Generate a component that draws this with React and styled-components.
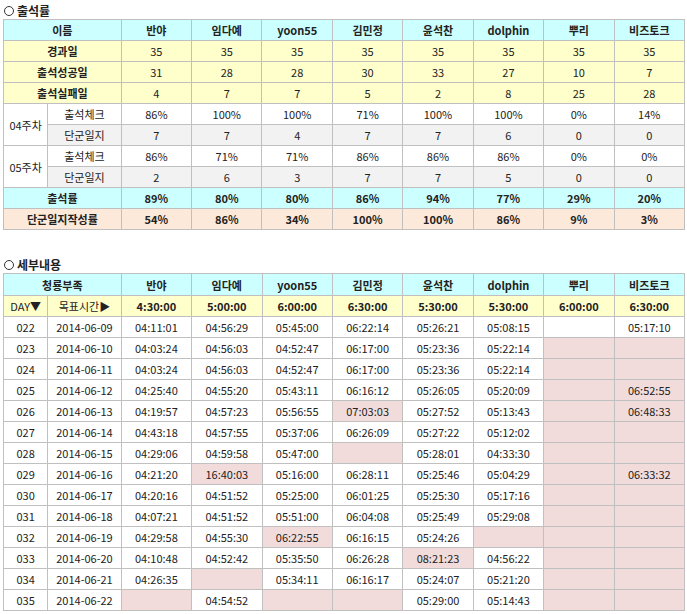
import React from 'react'
import styled, { createGlobalStyle } from 'styled-components'

const Global = createGlobalStyle`
  body {
    margin: 0;
    padding: 2px 2px 0 3px;
    font-family: "Noto Sans CJK KR", "Noto Sans", sans-serif;
    font-size: 11px;
    color: #222;
    background: #fff;
  }
`;

const Title = styled.div`
  font-size: 12px;
  font-weight: bold;
  height: 17px;
  line-height: 17px;
  padding-left: 1px;
  display: flex;
  align-items: center;
  gap: 3px;
`;

const Circle = styled.span`
  width: 8px;
  height: 8px;
  border: 1px solid #333;
  border-radius: 50%;
  display: inline-block;
`;

const Table = styled.table`
  border-collapse: collapse;
  table-layout: fixed;
  width: 682px;
  margin-bottom: ${p => p.$mb || 0}px;
`;

const colors = {
  cyan: '#ccffff',
  yellow: '#ffffcc',
  peach: '#fde9d9',
  grey: '#f2f2f2',
  pink: '#f2dcdb',
  white: '#fff',
};

const Cell = styled.td`
  border: 1px solid #c0c0c0;
  text-align: center;
  padding: 0;
  line-height: 14px;
  height: ${p => p.$h}px;
  background: ${p => colors[p.$bg || 'white']};
  font-weight: ${p => (p.$bold ? 'bold' : 'normal')};
  white-space: nowrap;
`;

const names = ['반야', '임다예', 'yoon55', '김민정', '윤석찬', 'dolphin', '뿌리', '비즈토크'];

const Cols = () => (
  <colgroup>
    <col style={{ width: 44 }} />
    <col style={{ width: 73 }} />
    {names.map(n => <col key={n} style={{ width: 70 }} />)}
  </colgroup>
);

const H = 20;

function SummaryRow({ label, values, bg, bold }) {
  return (
    <tr>
      <Cell colSpan={2} $h={H} $bg={bg} $bold>{label}</Cell>
      {values.map((v, i) => <Cell key={i} $h={H} $bg={bg} $bold={bold}>{v}</Cell>)}
    </tr>
  );
}

function WeekRows({ week, check, diary }) {
  return (
    <>
      <tr>
        <Cell rowSpan={2} $h={H}>{week}</Cell>
        <Cell $h={H}>출석체크</Cell>
        {check.map((v, i) => <Cell key={i} $h={H}>{v}</Cell>)}
      </tr>
      <tr>
        <Cell $h={H} $bg="grey">단군일지</Cell>
        {diary.map((v, i) => <Cell key={i} $h={H} $bg="grey">{v}</Cell>)}
      </tr>
    </>
  );
}

// '' = white empty, '!' prefix = pink, '!' alone = empty pink
const detail = [
  ['022', '2014-06-09', '04:11:01', '04:56:29', '05:45:00', '06:22:14', '05:26:21', '05:08:15', '', '05:17:10'],
  ['023', '2014-06-10', '04:03:24', '04:56:03', '04:52:47', '06:17:00', '05:23:36', '05:22:14', '!', '!'],
  ['024', '2014-06-11', '04:03:24', '04:56:03', '04:52:47', '06:17:00', '05:23:36', '05:22:14', '!', '!'],
  ['025', '2014-06-12', '04:25:40', '04:55:20', '05:43:11', '06:16:12', '05:26:05', '05:20:09', '!', '!06:52:55'],
  ['026', '2014-06-13', '04:19:57', '04:57:23', '05:56:55', '!07:03:03', '05:27:52', '05:13:43', '!', '!06:48:33'],
  ['027', '2014-06-14', '04:43:18', '04:57:55', '05:37:06', '06:26:09', '05:27:22', '05:12:02', '!', '!'],
  ['028', '2014-06-15', '04:29:06', '04:59:58', '05:47:00', '!', '05:28:01', '04:33:30', '!', '!'],
  ['029', '2014-06-16', '04:21:20', '!16:40:03', '05:16:00', '06:28:11', '05:25:46', '05:04:29', '!', '!06:33:32'],
  ['030', '2014-06-17', '04:20:16', '04:51:52', '05:25:00', '06:01:25', '05:25:30', '05:17:16', '!', '!'],
  ['031', '2014-06-18', '04:07:21', '04:51:52', '05:51:00', '06:04:08', '05:25:49', '05:29:08', '!', '!'],
  ['032', '2014-06-19', '04:29:58', '04:55:30', '!06:22:55', '06:16:15', '05:24:26', '!', '!', '!'],
  ['033', '2014-06-20', '04:10:48', '04:52:42', '05:35:50', '06:26:28', '!08:21:23', '04:56:22', '!', '!'],
  ['034', '2014-06-21', '04:26:35', '!', '05:34:11', '06:16:17', '05:24:07', '05:21:20', '!', '!'],
  ['035', '2014-06-22', '!', '04:54:52', '!', '!', '05:29:00', '05:14:43', '!', '!'],
];

const D = 20;

export default function App() {
  return (
    <>
      <Global />
      <Title><Circle />출석률</Title>
      <Table $mb={26}>
        <Cols />
        <tbody>
          <tr>
            <Cell colSpan={2} $h={H} $bg="cyan" $bold>이름</Cell>
            {names.map(n => <Cell key={n} $h={H} $bg="cyan" $bold>{n}</Cell>)}
          </tr>
          <SummaryRow label="경과일" bg="yellow" values={[35, 35, 35, 35, 35, 35, 35, 35]} />
          <SummaryRow label="출석성공일" bg="yellow" values={[31, 28, 28, 30, 33, 27, 10, 7]} />
          <SummaryRow label="출석실패일" bg="yellow" values={[4, 7, 7, 5, 2, 8, 25, 28]} />
          <WeekRows week="04주차" check={['86%', '100%', '100%', '71%', '100%', '100%', '0%', '14%']} diary={[7, 7, 4, 7, 7, 6, 0, 0]} />
          <WeekRows week="05주차" check={['86%', '71%', '71%', '86%', '86%', '86%', '0%', '0%']} diary={[2, 6, 3, 7, 7, 5, 0, 0]} />
          <SummaryRow label="출석률" bg="cyan" bold values={['89%', '80%', '80%', '86%', '94%', '77%', '29%', '20%']} />
          <SummaryRow label="단군일지작성률" bg="peach" bold values={['54%', '86%', '34%', '100%', '100%', '86%', '9%', '3%']} />
        </tbody>
      </Table>
      <Title><Circle />세부내용</Title>
      <Table>
        <Cols />
        <tbody>
          <tr>
            <Cell colSpan={2} $h={D + 1} $bg="cyan" $bold>청룡부족</Cell>
            {names.map(n => <Cell key={n} $h={D + 1} $bg="cyan" $bold>{n}</Cell>)}
          </tr>
          <tr>
            <Cell $h={D} $bg="yellow">DAY▼</Cell>
            <Cell $h={D} $bg="yellow">목표시간▶</Cell>
            {['4:30:00', '5:00:00', '6:00:00', '6:30:00', '5:30:00', '5:30:00', '6:00:00', '6:30:00'].map((t, i) => (
              <Cell key={i} $h={D} $bg="yellow" $bold>{t}</Cell>
            ))}
          </tr>
          {detail.map(row => (
            <tr key={row[0]}>
              {row.map((v, i) => {
                const pink = v.startsWith('!');
                return <Cell key={i} $h={D} $bg={pink ? 'pink' : 'white'}>{pink ? v.slice(1) : v}</Cell>;
              })}
            </tr>
          ))}
        </tbody>
      </Table>
    </>
  );
}
